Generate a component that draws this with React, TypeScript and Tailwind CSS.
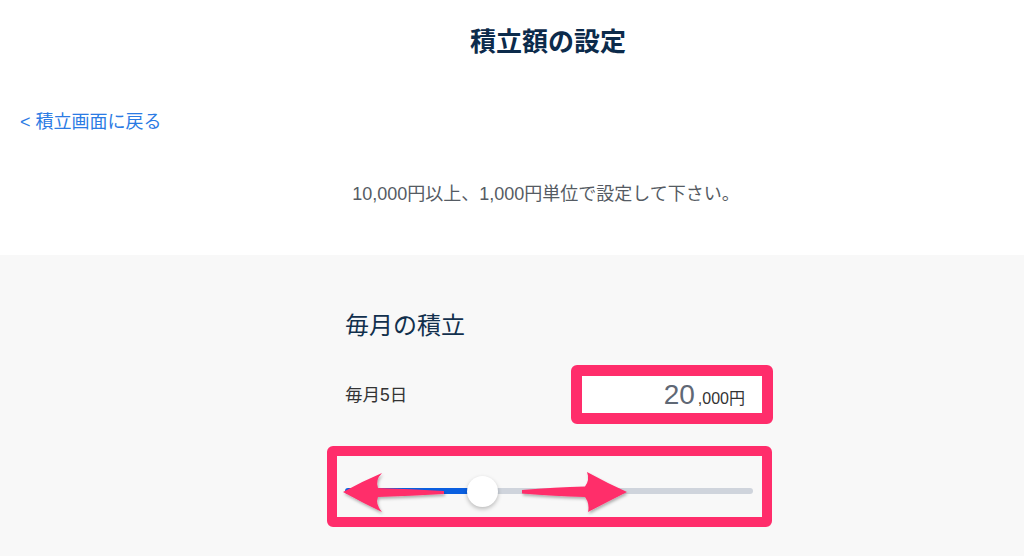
import React from 'react';

const PINK = '#ff2d6b';

const Arrows = () => (
  <svg
    className="pointer-events-none absolute left-0 top-0"
    width={1024}
    height={556}
    viewBox="0 0 1024 556"
  >
    <defs>
      <filter id="arrowShadow" x="-20%" y="-50%" width="140%" height="200%">
        <feDropShadow dx="1" dy="2" stdDeviation="1.5" floodColor="#000" floodOpacity="0.3" />
      </filter>
    </defs>
    {/* left arrow */}
    <path
      d="M343 492 Q363 481 382 473 Q375 480 378 488 Q410 489 444 491 L444 494 Q410 496 378 497 Q375 504 382 512 Q363 503 343 492 Z"
      fill={PINK}
      filter="url(#arrowShadow)"
    />
    {/* right arrow */}
    <path
      d="M522 490 Q555 487 585 486.5 Q590 480 587 472 Q607 483 627 492 Q607 502 588 512 Q590 504 585 497 Q555 496 522 493.5 Z"
      fill={PINK}
      filter="url(#arrowShadow)"
    />
  </svg>
);

export default function App() {
  return (
    <div className="relative h-[556px] w-[1024px] overflow-hidden bg-white font-['Liberation_Sans','Noto_Sans_CJK_JP',sans-serif]">
      <div className="h-[255px] bg-white">
        <h1 className="pl-[72px] pt-[26px] text-center text-[26px] font-bold leading-[32px] text-[#0c2b4b]">
          積立額の設定
        </h1>
        <a className="ml-[20px] mt-[52px] block text-[18px] leading-[24px] text-[#2b7be4]">
          &lt; 積立画面に戻る
        </a>
        <p className="mt-[48px] pl-[68px] text-center text-[18px] leading-[24px] text-[#555b63]">
          10,000円以上、1,000円単位で設定して下さい。
        </p>
      </div>

      <div className="h-[301px] bg-[#f8f8f8]">
        <div className="ml-[345px] w-[428px] pt-[55px]">
          <h2 className="text-[24px] leading-[32px] text-[#12304d]">毎月の積立</h2>

          <div className="mt-[23px] flex items-center justify-between">
            <span className="text-[17.5px] leading-[24px] text-[#333]">毎月5日</span>
            <div className="h-[59px] w-[202px] rounded-[6px] border-[11px] border-[#ff2d6b] bg-white">
              <div className="flex h-full items-baseline justify-end pr-[17px] pt-[2px]">
                <span className="text-[28px] leading-[33px] text-[#5f6875]">20</span>
                <span className="ml-[3px] text-[16px] leading-[20px] text-[#333]">,000円</span>
              </div>
            </div>
          </div>

          <div className="-ml-[18px] mt-[22px] h-[81px] w-[445px] rounded-[6px] border-[10px] border-[#ff2d6b] pl-[8px] pr-[9px] pt-[32px]">
            <div className="relative flex h-[6px] w-[408px]">
              <div className="h-full w-[137px] rounded-l-full bg-[#0a5fe0]" />
              <div className="h-full flex-1 rounded-r-full bg-[#cfd4dc]" />
              <div className="absolute left-[122px] top-[-12px] h-[31px] w-[31px] rounded-full bg-white shadow-[0_2px_4px_rgba(0,0,0,0.25)]" />
            </div>
          </div>
        </div>
      </div>

      <Arrows />
    </div>
  );
}
